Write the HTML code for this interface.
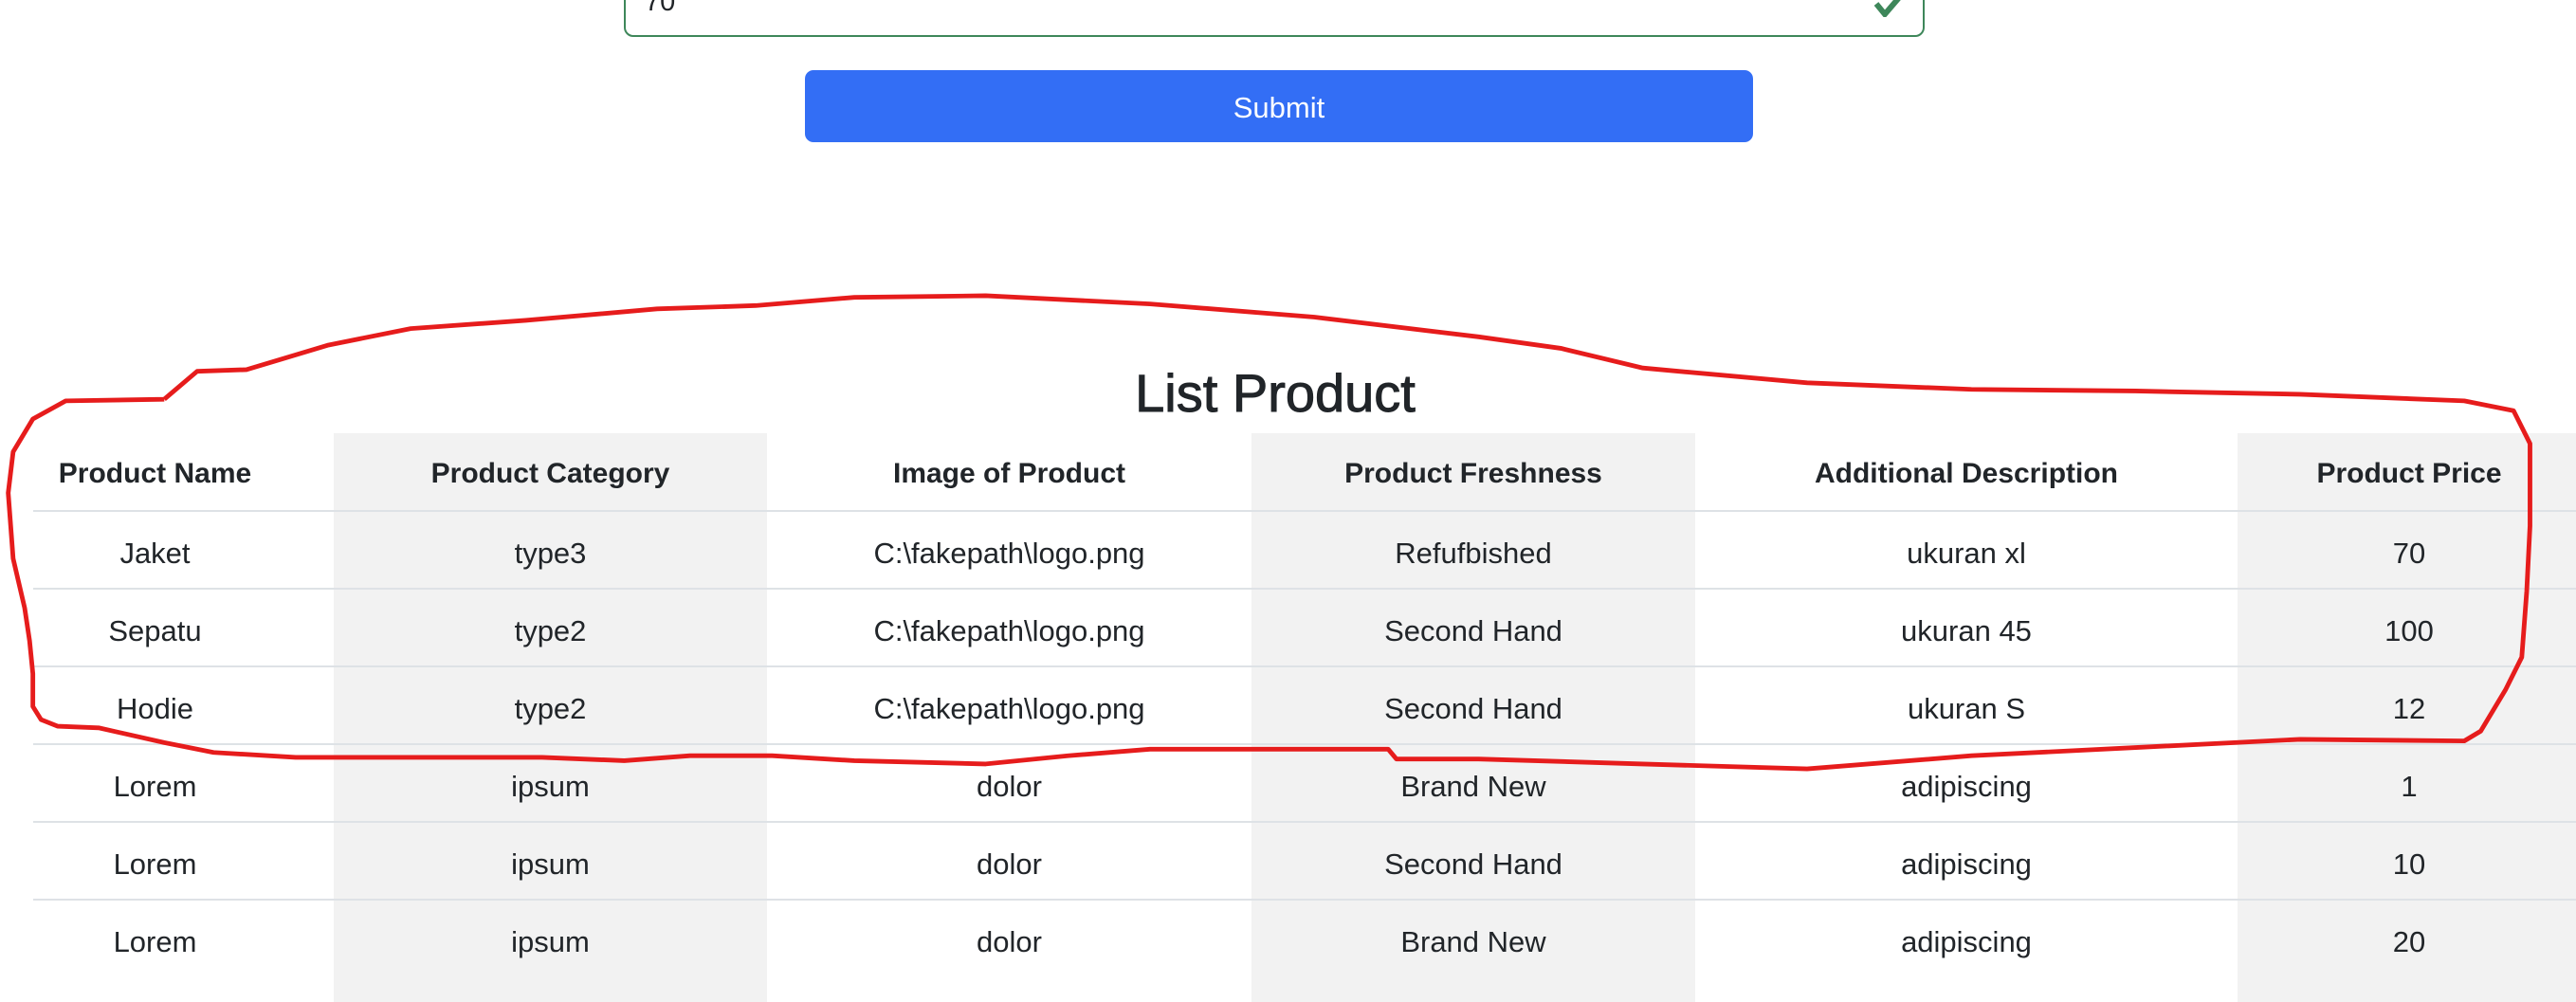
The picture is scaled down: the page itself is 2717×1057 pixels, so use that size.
<!DOCTYPE html>
<html><head><meta charset="utf-8"><style>
html,body{margin:0;padding:0;width:2717px;height:1026px;overflow:hidden;background:#fff;font-family:"Liberation Sans",sans-serif;color:#212529;}
.abs{position:absolute;}
.input{left:658px;top:-20px;width:1372px;height:59px;border:2px solid #3e875a;border-radius:10px;box-sizing:border-box;}
.btn{left:849px;top:74px;width:1000px;height:76px;background:#336ef5;border-radius:9px;color:#fff;font-size:31px;display:flex;align-items:center;justify-content:center;padding-top:4px;box-sizing:border-box;}
.title{left:0;width:2690px;top:382px;text-align:center;font-size:56px;-webkit-text-stroke:1px #212529;}
.stripe{background:#f2f2f2;top:457px;height:600px;}
.hl{left:35px;width:2682px;height:2px;background:#dee2e6;}
.cell{position:absolute;text-align:center;font-size:31px;line-height:82px;}
.th{font-weight:bold;font-size:30px;}
</style></head><body>
<div class="abs input"></div>
<div class="abs" style="left:680px;top:-14px;font-size:29px;">70</div>
<svg class="abs" style="left:1976px;top:0" width="34" height="18" viewBox="0 0 34 18"><path d="M3 4 L12 15 L30 -6" stroke="#3e875a" stroke-width="6" fill="none"/></svg>
<div class="abs btn">Submit</div>
<div class="abs title">List Product</div>
<div class="abs stripe" style="left:352px;width:457px"></div>
<div class="abs stripe" style="left:1320px;width:468px"></div>
<div class="abs stripe" style="left:2360px;width:357px"></div>
<div class="abs hl" style="top:538px"></div>
<div class="abs hl" style="top:620px"></div>
<div class="abs hl" style="top:702px"></div>
<div class="abs hl" style="top:784px"></div>
<div class="abs hl" style="top:866px"></div>
<div class="abs hl" style="top:948px"></div>
<div id="t"></div>
<script>
var cols=[[35,292],[352,809],[809,1320],[1320,1788],[1788,2360],[2360,2722]];
var rows=[["Product Name","Product Category","Image of Product","Product Freshness","Additional Description","Product Price"],
["Jaket","type3","C:\\fakepath\\logo.png","Refufbished","ukuran xl","70"],
["Sepatu","type2","C:\\fakepath\\logo.png","Second Hand","ukuran 45","100"],
["Hodie","type2","C:\\fakepath\\logo.png","Second Hand","ukuran S","12"],
["Lorem","ipsum","dolor","Brand New","adipiscing","1"],
["Lorem","ipsum","dolor","Second Hand","adipiscing","10"],
["Lorem","ipsum","dolor","Brand New","adipiscing","20"]];
var tops=[459,543,625,707,789,871,953];
var h="";
rows.forEach(function(r,i){r.forEach(function(c,j){
var w=cols[j][1]-cols[j][0];
h+='<div class="cell'+(i==0?' th':'')+'" style="left:'+cols[j][0]+'px;width:'+w+'px;top:'+tops[i]+'px">'+c.replace(/\\/g,"&#92;")+'</div>';});});
document.getElementById("t").innerHTML=h;
</script>
<svg class="abs" style="left:0;top:0" width="2717" height="1026" viewBox="0 0 1568 592" preserveAspectRatio="none">
<path d="M100 243 L40 244 L20 255 L8 275 L5 300 L8 340 L15 370 L18 390 L20 410 L20 430 L25 438 L35 442 L60 443 L100 452 L130 458 L180 461 L330 461 L380 463 L420 460 L470 460 L520 463 L600 465 L650 460 L700 456 L845 456 L850 462 L900 462 L1000 465 L1100 468 L1200 460 L1300 455 L1400 450 L1500 451 L1510 445 L1525 420 L1535 400 L1538 360 L1540 320 L1540 270 L1530 250 L1500 244 L1400 240 L1300 238 L1200 237 L1100 233 L1000 224 L950 212 L900 205 L800 193 L700 185 L600 180 L520 181 L460 186 L400 188 L320 195 L250 200 L200 210 L150 225 L120 226 L100 243" stroke="#e61c1c" stroke-width="2.8" fill="none" stroke-linejoin="round"/>
</svg>
</body></html>
